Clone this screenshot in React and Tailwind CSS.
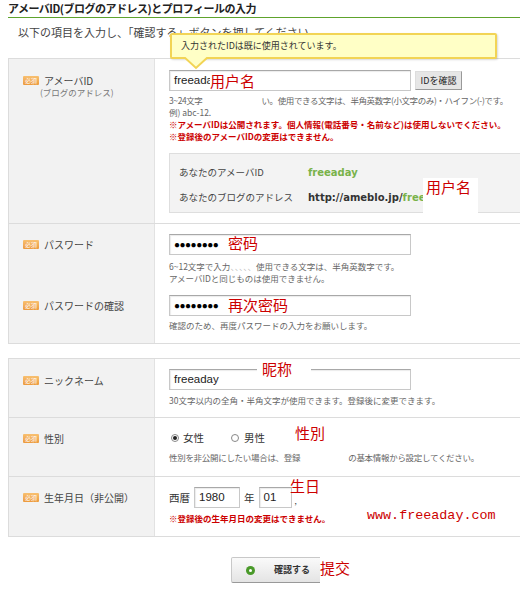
import React from 'react';

const JP = "font-['MS_PGothic','Noto_Sans_CJK_JP',sans-serif]";

function Badge() {
  return (
    <span className="mr-[5px] inline-flex h-[9px] w-[16px] items-center justify-center rounded-[1px] bg-gradient-to-b from-[#f8c070] to-[#ec9a3c] text-[6px] leading-none text-white">
      必須
    </span>
  );
}

function Label({ children, sub, pt }) {
  return (
    <div className={`w-[146px] shrink-0 border-r border-[#e2e2e2] bg-[#f2f2f2] pl-[14px] ${pt}`}>
      <div className="flex h-[13px] items-center whitespace-nowrap text-[10px] leading-[13px] text-[#444]">
        <Badge />
        {children}
      </div>
      {sub && <div className="ml-[17px] whitespace-nowrap text-[8.5px] leading-[11px] text-[#777]">{sub}</div>}
    </div>
  );
}

function Field({ children, w = 'w-[242px]' }) {
  return (
    <div className={`flex h-[21px] ${w} items-center border border-[#c8c8c8] border-t-[#a8a8a8] bg-white px-[4px] font-['Liberation_Sans',sans-serif] text-[11.5px] text-[#222] shadow-[inset_1px_1px_1px_rgba(0,0,0,0.08)]`}>
      {children}
    </div>
  );
}

function Note({ children, className = '' }) {
  return <p className={`whitespace-nowrap text-[8.5px] leading-[12px] text-[#666] ${className}`}>{children}</p>;
}

function Warn({ children }) {
  return <p className="whitespace-nowrap text-[8.5px] font-bold leading-[12px] text-[#cc0000]">{children}</p>;
}

function Dots() {
  return <span className="text-[10px] tracking-[-0.5px] text-black">●●●●●●●●</span>;
}

function Tag({ children, className }) {
  return (
    <span className={`absolute whitespace-nowrap font-['Noto_Sans_CJK_SC',sans-serif] text-[15px] leading-[16px] text-[#cc0000] ${className}`}>
      {children}
    </span>
  );
}

export default function App() {
  return (
    <div className={`relative h-[593px] w-[520px] overflow-hidden bg-white text-[#333] ${JP}`}>
      {/* section heading */}
      <div className="ml-2 h-[18px] border-b border-[#5ea32c] pt-[2px] text-[11px] font-bold leading-[13px] tracking-[-0.5px] text-[#222]">
        アメーバID(ブログのアドレス)とプロフィールの入力
      </div>
      <p className="ml-[18px] mt-[8px] text-[11px] leading-[13px] text-[#444]">
        以下の項目を入力し、「確認する」ボタンを押してください。
      </p>

      {/* account block */}
      <div className="ml-2 mt-[19px] w-[520px] border border-[#dcdcdc]">
        <div className="flex h-[165px] border-b border-[#dcdcdc]">
          <Label pt="pt-[15px]" sub="(ブログのアドレス)">アメーバID</Label>
          <div className="flex-1 pl-[14px] pt-[11px]">
            <div className="flex items-center gap-[4px]">
              <Field>freeada</Field>
              <button className="h-[19px] w-[47px] border border-[#999] border-t-[#ddd] border-l-[#ddd] bg-[#e6e6e6] text-[9px] text-[#222]">
                IDを確認
              </button>
            </div>
            <div className="mt-[3px]">
              <Note className="tracking-[-0.4px]">
                3~24文字<span className="inline-block w-[59px]" />い。使用できる文字は、半角英数字(小文字のみ)・ハイフン(-)です。
              </Note>
              <Note>例) abc-12.</Note>
              <Warn>※アメーバIDは公開されます。個人情報(電話番号・名前など)は使用しないでください。</Warn>
              <Warn>※登録後のアメーバIDの変更はできません。</Warn>
            </div>
            <div className="mt-[11px] h-[60px] border border-[#dedede] bg-[#f3f3f3] pl-[9px] pt-[12px] text-[9.5px] leading-[13px] text-[#444]">
              <div className="flex whitespace-nowrap">
                <span className="w-[129px]">あなたのアメーバID</span>
                <span className="font-['DejaVu_Sans',sans-serif] text-[10px] font-bold text-[#79b24a]">freeaday</span>
              </div>
              <div className="mt-[12px] flex whitespace-nowrap">
                <span className="w-[129px]">あなたのブログのアドレス</span>
                <span className="font-['DejaVu_Sans',sans-serif] text-[10px] font-bold text-[#333]">
                  http://ameblo.jp/<span className="text-[#79b24a]">freeaday</span>
                </span>
              </div>
            </div>
          </div>
        </div>

        <div className="flex h-[60px]">
          <Label pt="pt-[14px]">パスワード</Label>
          <div className="flex-1 pl-[14px] pt-[10px]">
            <Field><Dots /></Field>
            <div className="mt-[5px]">
              <Note className="leading-[11px]">
                6~12文字で入力<span className="text-[#bbb]">、、、、、</span>使用できる文字は、半角英数字です。
              </Note>
              <Note className="leading-[11px]">アメーバIDと同じものは使用できません。</Note>
            </div>
          </div>
        </div>

        <div className="flex h-[59px]">
          <Label pt="pt-[15px]">パスワードの確認</Label>
          <div className="flex-1 pl-[14px] pt-[11px]">
            <Field><Dots /></Field>
            <Note className="mt-[3px]">確認のため、再度パスワードの入力をお願いします。</Note>
          </div>
        </div>
      </div>

      {/* profile block */}
      <div className="ml-2 mt-[14px] w-[520px] border border-[#dcdcdc]">
        <div className="flex h-[59px] border-b border-[#dcdcdc]">
          <Label pt="pt-[15px]">ニックネーム</Label>
          <div className="flex-1 pl-[14px] pt-[10px]">
            <Field>freeaday</Field>
            <Note className="mt-[4px]">30文字以内の全角・半角文字が使用できます。登録後に変更できます。</Note>
          </div>
        </div>

        <div className="flex h-[59px] border-b border-[#dcdcdc]">
          <Label pt="pt-[14px]">性別</Label>
          <div className="flex-1 pl-[16px] pt-[13px]">
            <div className="flex items-center text-[10.5px] leading-[13px] text-[#333]">
              <span className="flex h-[8px] w-[8px] items-center justify-center rounded-full border border-[#888] bg-white">
                <span className="h-[4px] w-[4px] rounded-full bg-[#222]" />
              </span>
              <span className="ml-[4px]">女性</span>
              <span className="ml-[27px] h-[8px] w-[8px] rounded-full border border-[#888] bg-white" />
              <span className="ml-[5px]">男性</span>
            </div>
            <Note className="ml-[-2px] mt-[7px] tracking-[-0.3px]">
              性別を非公開にしたい場合は、登録<span className="inline-block w-[48px]" />の基本情報から設定してください。
            </Note>
          </div>
        </div>

        <div className="flex h-[59px]">
          <Label pt="pt-[14px]">生年月日（非公開）</Label>
          <div className="flex-1 pl-[14px] pt-[10px]">
            <div className="flex items-center text-[10.5px] text-[#333]">
              <span>西暦</span>
              <div className="ml-[4px]"><Field w="w-[46px]">1980</Field></div>
              <span className="ml-[4px]">年</span>
              <div className="ml-[4px]"><Field w="w-[33px]">01</Field></div>
              <span className="ml-[3px] mt-[6px] text-[8px]">,</span>
            </div>
            <div className="mt-[4px]">
              <Warn>※登録後の生年月日の変更はできません。</Warn>
            </div>
          </div>
        </div>
      </div>

      {/* submit */}
      <div className="mt-[20px] flex justify-center pl-[54px]">
        <button className="flex h-[26px] w-[112px] items-center rounded-[2px] border border-[#c8c8c8] border-b-[#999] bg-gradient-to-b from-[#fafafa] to-[#e4e4e4] pl-[14px] text-[9px] font-bold text-[#333]">
          <span className="flex h-[9px] w-[9px] items-center justify-center rounded-full bg-[#4a9a2a]">
            <span className="h-[3px] w-[3px] rounded-full bg-white" />
          </span>
          <span className="ml-[19px]">確認する</span>
        </button>
      </div>

      {/* error tooltip */}
      <div className="absolute left-[170px] top-[33px] h-[26px] w-[327px] rounded-[2px] border-2 border-[#f2d455] bg-[#ffffc6] pl-[9px] pt-[5px] text-[9px] leading-[12px] text-[#333] shadow-[1px_1px_2px_rgba(0,0,0,0.15)]">
        入力されたIDは既に使用されています。
      </div>
      <svg className="absolute left-[184px] top-[57px]" width="26" height="13" viewBox="0 0 26 13">
        <path d="M0 0 L12 11 L24 0" fill="#ffffc6" stroke="#f2d455" strokeWidth="2" />
      </svg>

      {/* red notes */}
      <Tag className="left-[210px] top-[73px] bg-white">用户名</Tag>
      <Tag className="left-[423px] top-[178px] h-[36px] w-[55px] bg-white pl-[3px] pt-[1px]">用户名</Tag>
      <Tag className="left-[228px] top-[235px]">密码</Tag>
      <Tag className="left-[228px] top-[297px]">再次密码</Tag>
      <Tag className="left-[257px] top-[361px] w-[54px] bg-white pl-[5px]">昵称</Tag>
      <Tag className="left-[295px] top-[425px]">性別</Tag>
      <Tag className="left-[290px] top-[478px]">生日</Tag>
      <span className="absolute left-[367px] top-[508px] font-['Liberation_Mono',monospace] text-[13.4px] leading-[16px] text-[#cc0000]">
        www.freeaday.com
      </span>
      <Tag className="left-[320px] top-[557px] h-[26px] w-[26px] bg-white pt-[3px]">
        提交
      </Tag>
    </div>
  );
}
